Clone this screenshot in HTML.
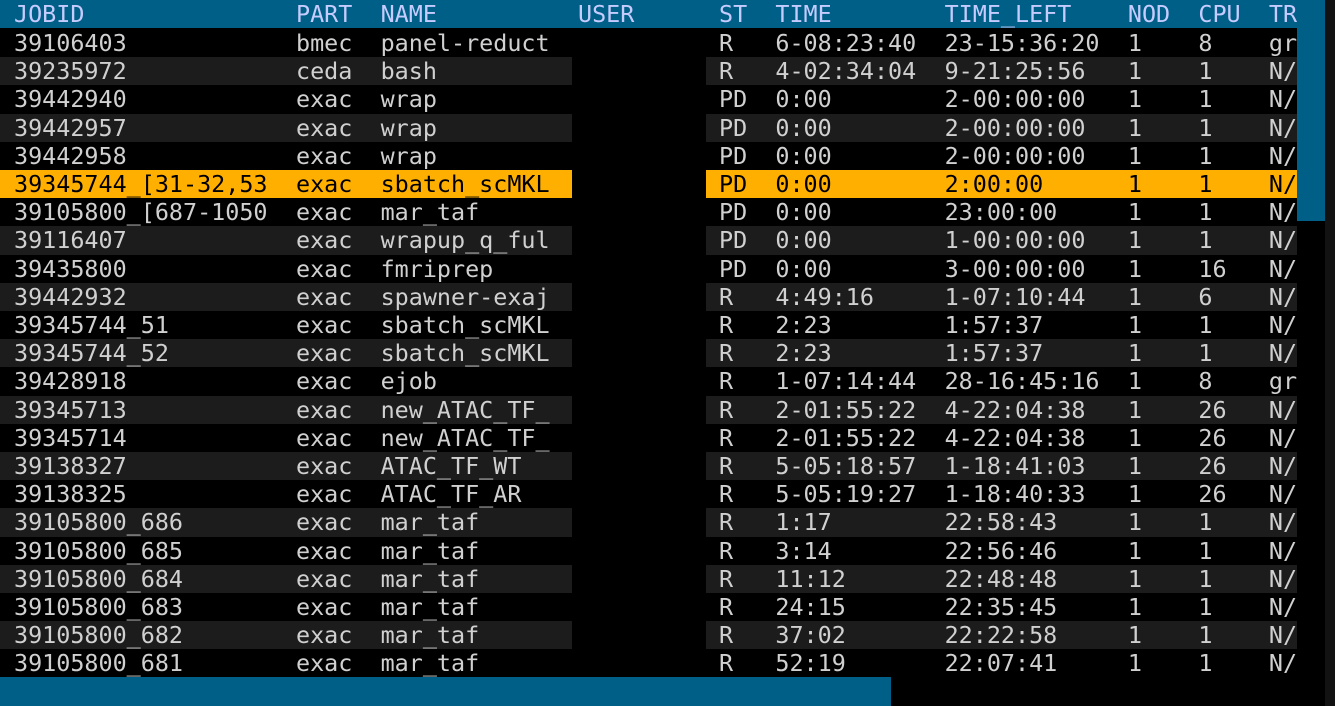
<!DOCTYPE html>
<html><head><meta charset="utf-8"><style>
html,body{margin:0;padding:0;background:#000;width:1335px;height:706px;overflow:hidden;position:relative;font-family:"DejaVu Sans Mono","Liberation Mono",monospace;}
.hdr{position:absolute;left:0;top:0;width:1325px;height:28px;background:#005f87;}
.row{position:absolute;left:0;height:28.2px;width:1297px;}
.band{position:absolute;top:0;height:100%;z-index:1;}
.t{position:absolute;left:0;top:0;white-space:pre;font-size:23.4px;line-height:28.2px;color:#d0d0d0;z-index:2;}
.t span{position:absolute;top:0;}
.h .t{color:#c6ccff;top:0;}
.sel .t{color:#000;}
.vs{position:absolute;left:1297px;top:0;width:28px;height:221px;background:#005f87;z-index:3;}
.rs{position:absolute;left:1325px;top:0;width:10px;height:706px;background:#121212;z-index:3;}
.hs{position:absolute;left:0;top:677px;width:891px;height:29px;background:#005f87;z-index:3;}
</style></head><body>
<div class="hdr"></div>
<div id="rows"></div>
<div class="vs"></div>
<div class="rs"></div>
<div class="hs"></div>
<script>
var cols=[0,20,26,40,50,54,66,79,84,89];
var data=[
["39106403","bmec","panel-reduct","","R","6-08:23:40","23-15:36:20","1","8","gr"],
["39235972","ceda","bash","","R","4-02:34:04","9-21:25:56","1","1","N/"],
["39442940","exac","wrap","","PD","0:00","2-00:00:00","1","1","N/"],
["39442957","exac","wrap","","PD","0:00","2-00:00:00","1","1","N/"],
["39442958","exac","wrap","","PD","0:00","2-00:00:00","1","1","N/"],
["39345744_[31-32,53","exac","sbatch_scMKL","","PD","0:00","2:00:00","1","1","N/"],
["39105800_[687-1050","exac","mar_taf","","PD","0:00","23:00:00","1","1","N/"],
["39116407","exac","wrapup_q_ful","","PD","0:00","1-00:00:00","1","1","N/"],
["39435800","exac","fmriprep","","PD","0:00","3-00:00:00","1","16","N/"],
["39442932","exac","spawner-exaj","","R","4:49:16","1-07:10:44","1","6","N/"],
["39345744_51","exac","sbatch_scMKL","","R","2:23","1:57:37","1","1","N/"],
["39345744_52","exac","sbatch_scMKL","","R","2:23","1:57:37","1","1","N/"],
["39428918","exac","ejob","","R","1-07:14:44","28-16:45:16","1","8","gr"],
["39345713","exac","new_ATAC_TF_","","R","2-01:55:22","4-22:04:38","1","26","N/"],
["39345714","exac","new_ATAC_TF_","","R","2-01:55:22","4-22:04:38","1","26","N/"],
["39138327","exac","ATAC_TF_WT","","R","5-05:18:57","1-18:41:03","1","26","N/"],
["39138325","exac","ATAC_TF_AR","","R","5-05:19:27","1-18:40:33","1","26","N/"],
["39105800_686","exac","mar_taf","","R","1:17","22:58:43","1","1","N/"],
["39105800_685","exac","mar_taf","","R","3:14","22:56:46","1","1","N/"],
["39105800_684","exac","mar_taf","","R","11:12","22:48:48","1","1","N/"],
["39105800_683","exac","mar_taf","","R","24:15","22:35:45","1","1","N/"],
["39105800_682","exac","mar_taf","","R","37:02","22:22:58","1","1","N/"],
["39105800_681","exac","mar_taf","","R","52:19","22:07:41","1","1","N/"]];
var hdr=["JOBID","PART","NAME","USER","ST","TIME","TIME_LEFT","NOD","CPU","TR"];
function mk(vals,top,cls,bg){
 var r=document.createElement('div');r.className='row '+cls;r.style.top=top+'px';
 var h='';
 if(bg){h+='<div class="band" style="left:0;width:572px;background:'+bg+'"></div><div class="band" style="left:706px;width:591px;background:'+bg+'"></div>';}
 h+='<div class="t">';
 for(var i=0;i<vals.length;i++){h+='<span style="left:'+(14+cols[i]*14.1)+'px">'+vals[i]+'</span>';}
 h+='</div>';r.innerHTML=h;document.getElementById('rows').appendChild(r);
}
mk(hdr,0,'h',null);
for(var i=0;i<data.length;i++){
 var bg=null,cls='';
 if(i==5){bg='#ffaf00';cls='sel';} else if(i%2==1){bg='#1c1c1c';}
 mk(data[i],29+i*28.2,cls,bg);
}
</script>
</body></html>
